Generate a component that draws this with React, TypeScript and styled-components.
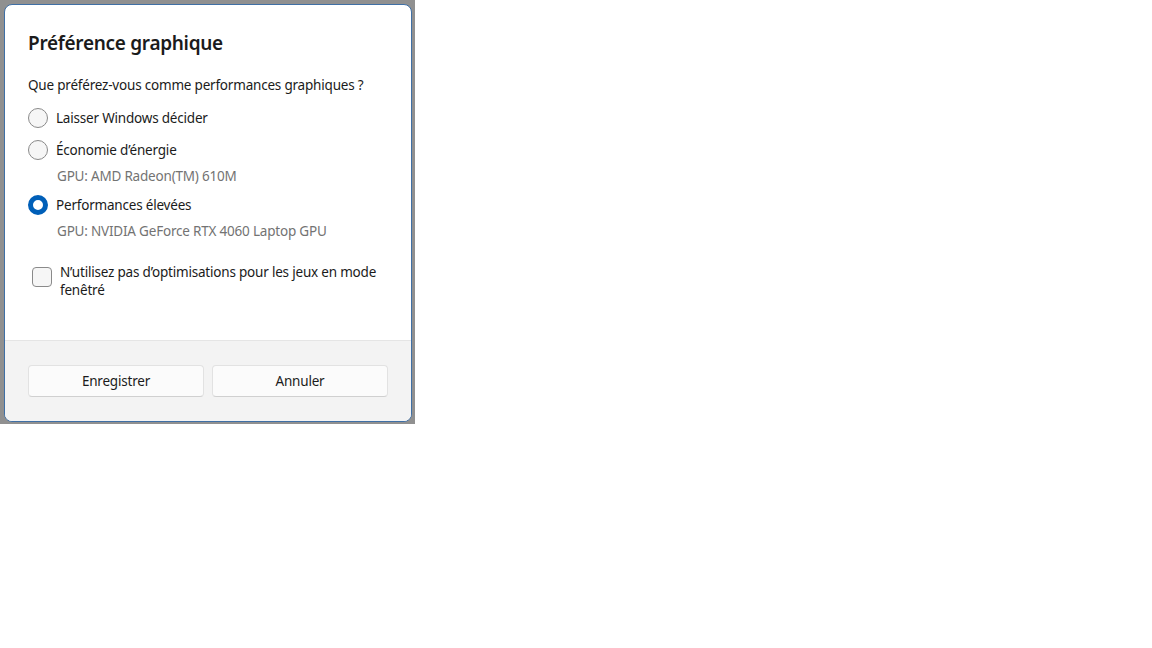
import styled, { createGlobalStyle } from "styled-components";

const GlobalStyle = createGlobalStyle`
  body {
    margin: 0;
    background: #ffffff;
    font-family: "Segoe UI", "Noto Sans", sans-serif;
    color: #1b1b1b;
  }
`;

type Option = {
  id: string;
  label: string;
  gpu?: string;
};

const options: Option[] = [
  { id: "auto", label: "Laisser Windows décider" },
  { id: "saving", label: "Économie d’énergie", gpu: "GPU: AMD Radeon(TM) 610M" },
  {
    id: "high",
    label: "Performances élevées",
    gpu: "GPU: NVIDIA GeForce RTX 4060 Laptop GPU",
  },
];

export default function App() {
  const selected = "high";

  return (
    <>
      <GlobalStyle />
      <Backdrop>
        <Dialog>
          <Body>
            <Title>Préférence graphique</Title>
            <Question>Que préférez-vous comme performances graphiques ?</Question>
            <OptionList>
              {options.map((option) => (
                <OptionItem key={option.id}>
                  <RadioRow>
                    <Radio checked={option.id === selected} />
                    <RadioLabel>{option.label}</RadioLabel>
                  </RadioRow>
                  {option.gpu && <GpuText>{option.gpu}</GpuText>}
                </OptionItem>
              ))}
            </OptionList>
            <CheckRow>
              <CheckBox />
              <CheckLabel>
                N’utilisez pas d’optimisations pour les jeux en mode fenêtré
              </CheckLabel>
            </CheckRow>
          </Body>
          <Footer>
            <FooterButton type="button">Enregistrer</FooterButton>
            <FooterButton type="button">Annuler</FooterButton>
          </Footer>
        </Dialog>
      </Backdrop>
    </>
  );
}

const Backdrop = styled.div`
  width: 408px;
  padding: 4px 3px 2px 4px;
  background: #909090;
`;

const Dialog = styled.div`
  box-sizing: border-box;
  width: 408px;
  height: 418px;
  display: flex;
  flex-direction: column;
  border: 1px solid #3f6fa5;
  border-radius: 8px;
  background: #ffffff;
  overflow: hidden;
`;

const Body = styled.div`
  flex: 1;
  padding: 24px 23px 0 23px;
  font-size: 13.5px;
  letter-spacing: -0.2px;
`;

const Title = styled.h1`
  margin: 0;
  font-size: 19px;
  line-height: 28px;
  font-weight: 600;
  letter-spacing: -0.3px;
  color: #1b1b1b;
`;

const Question = styled.p`
  margin: 18px 0 0;
  line-height: 20px;
  color: #1b1b1b;
`;

const OptionList = styled.div`
  display: flex;
  flex-direction: column;
  margin-top: 7px;
`;

const OptionItem = styled.div`
  display: flex;
  flex-direction: column;
  &:nth-child(3) {
    margin-top: 3px;
  }
`;

const RadioRow = styled.div`
  display: flex;
  align-items: center;
  height: 32px;
  gap: 8px;
`;

const Radio = styled.span<{ checked: boolean }>`
  box-sizing: border-box;
  width: 20px;
  height: 20px;
  border-radius: 50%;
  flex-shrink: 0;
  background: ${({ checked }) => (checked ? "#ffffff" : "#f6f6f6")};
  border: ${({ checked }) =>
    checked ? "5px solid #005fb8" : "1px solid #8a8a8a"};
`;

const RadioLabel = styled.span`
  line-height: 20px;
`;

const GpuText = styled.span`
  padding-left: 29px;
  line-height: 20px;
  color: #737373;
`;

const CheckRow = styled.div`
  display: flex;
  align-items: flex-start;
  gap: 8px;
  margin-top: 22px;
  padding-left: 4px;
  padding-right: 2px;
`;

const CheckBox = styled.span`
  box-sizing: border-box;
  width: 20px;
  height: 20px;
  margin-top: 4px;
  flex-shrink: 0;
  border: 1px solid #8a8a8a;
  border-radius: 4px;
  background: #f6f6f6;
`;

const CheckLabel = styled.span`
  line-height: 18px;
`;

const Footer = styled.div`
  display: grid;
  grid-template-columns: 1fr 1fr;
  gap: 8px;
  padding: 24px 23px;
  background: #f3f3f3;
  border-top: 1px solid #e5e5e5;
`;

const FooterButton = styled.button`
  height: 32px;
  border: 1px solid #e2e2e2;
  border-bottom-color: #d0d0d0;
  border-radius: 4px;
  background: #fbfbfb;
  font-family: "Segoe UI", "Noto Sans", sans-serif;
  font-size: 13.5px;
  letter-spacing: -0.2px;
  color: #1b1b1b;
  cursor: pointer;
`;
